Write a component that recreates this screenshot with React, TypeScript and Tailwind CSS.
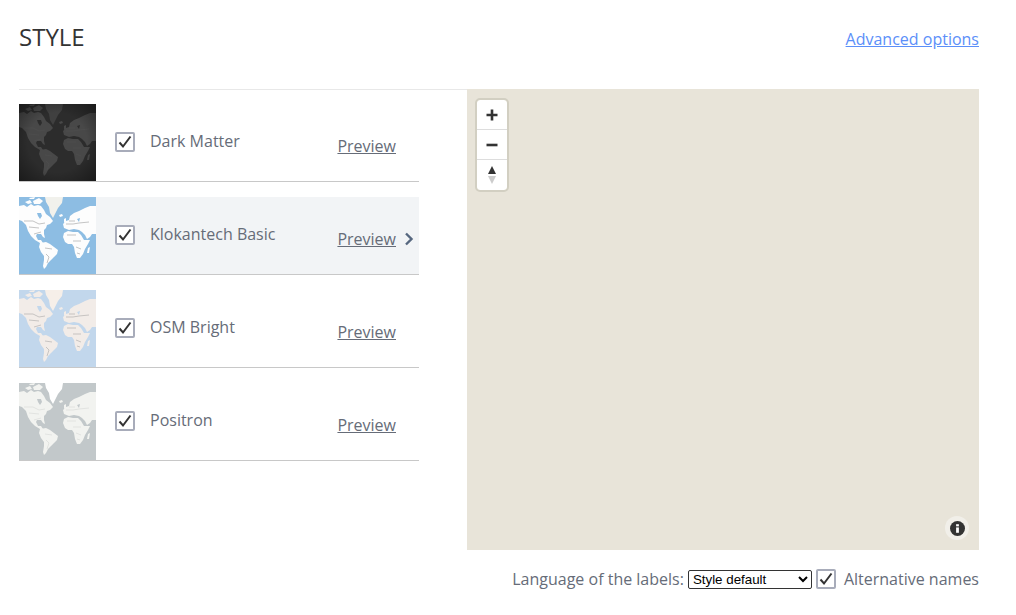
const font = { fontFamily: '"Open Sans", sans-serif' }

// rough world map drawn in a 77x77 box
function WorldThumb({ sea, land, ice, detail, dark }: { sea: string; land: string; ice: string; detail: string; dark?: boolean }) {
  const id = 'vignette'
  return (
    <svg width="77" height="77" viewBox="0 0 77 77" className="shrink-0 block">
      <defs>
        <radialGradient id={id} cx="50%" cy="50%" r="70%">
          <stop offset="55%" stopColor="#000" stopOpacity="0" />
          <stop offset="100%" stopColor="#000" stopOpacity="0.4" />
        </radialGradient>
      </defs>
      <rect width="77" height="77" fill={sea} />
      <g fill={land}>
        {/* north america */}
        <path d="M0 9 L5 8 L8 10 L12 7 L15 9 L19 8 L22 9 L25 13 L27 17 L31 20 L34 24 L31 27 L28 28 L27 31 L25 33 L25 37 L26 41 L24 40 L22 37 L18 37 L17 39 L19 43 L22 43 L24 46 L21 46 L16 43 L12 39 L9 34 L7 28 L3 24 L0 23 Z" />
        {/* arctic islands */}
        <path d="M6 5 L11 3 L13 6 L9 7 Z" />
        <path d="M14 4 L20 1 L24 4 L21 7 L15 7 Z" />
        <path d="M10 1 L16 0 L15 2 L11 2 Z" />
        {/* south america */}
        <path d="M21 46 L27 45 L31 47 L35 50 L39 53 L38 57 L35 60 L32 63 L29 66 L27 70 L25 72 L24 69 L25 63 L25 59 L22 55 L20 50 Z" />
        {/* eurasia */}
        <path d="M45 31 L44 27 L47 24 L50 23 L51 19 L55 16 L60 14 L66 11 L71 9 L77 9 L77 37 L73 37 L71 40 L68 42 L66 38 L63 35 L60 33 L55 32 L50 33 Z" />
        {/* africa */}
        <path d="M45 36 L49 34 L54 35 L59 35 L62 38 L65 43 L71 43 L69 47 L66 52 L64 57 L61 61 L58 61 L56 56 L55 50 L53 47 L49 47 L46 45 L44 40 Z" />
        <path d="M40 18 L43 17 L44 19 L41 20 Z" />
        <path d="M45 22 L47 21 L47 25 L45 26 Z" />
        <path d="M69 51 L71 50 L70 56 L68 56 Z" />
      </g>
      <path d="M26 0 L44 0 L43 6 L39 11 L36 17 L34 21 L31 16 L30 10 L27 5 Z" fill={ice} />
      <g fill={sea}>
        <path d="M18 16 L22 16 L23 19 L21 22 L19 19 Z" />
        <path d="M58 22 L61 21 L60 25 Z" />
      </g>
      <g fill="none" stroke={detail} strokeWidth="0.5">
        <path d="M5 24 H14 L20 27 L26 26 M10 30 L20 31 M15 37 L22 35" />
        <path d="M26 51 L33 52 M27 57 L30 60 L28 66" />
        <path d="M47 27 L54 27 L60 26 L70 25 M50 24 L56 24" />
        <path d="M48 38 L57 38 M54 44 L62 44 M57 50 L62 52 M58 56 L61 57" />
      </g>
      {dark && <rect width="77" height="77" fill={`url(#${id})`} />}
    </svg>
  )
}

function Check({ className }: { className: string }) {
  return (
    <div className={`shrink-0 flex items-center justify-center bg-white border-2 border-[#a8acba] rounded-[2px] ${className}`}>
      <svg width="14" height="14" viewBox="0 0 14 14">
        <path d="M1.500 7.500 L5 11.500 L12.500 1.500" fill="none" stroke="#333" strokeWidth="2" />
      </svg>
    </div>
  )
}

const styles = [
  { name: 'Dark Matter', sea: '#2c2c2c', land: '#484848', ice: '#404040', detail: '#505050', dark: true },
  { name: 'Klokantech Basic', sea: '#8dbde3', land: '#fdfdfd', ice: '#f1f1ec', detail: '#8a8a8a', active: true },
  { name: 'OSM Bright', sea: '#c2d7ec', land: '#f2ece8', ice: '#f6efe9', detail: '#9a9a9a' },
  { name: 'Positron', sea: '#c2c8ca', land: '#f2f3f0', ice: '#ffffff', detail: '#d0d2d0' },
]

function StyleRow({ item }: { item: (typeof styles)[number] }) {
  return (
    <div className={`flex items-center h-[78px] mb-[15px] border-b border-[#c8c8c8] ${item.active ? 'bg-[#f2f4f6]' : ''}`}>
      <WorldThumb sea={item.sea} land={item.land} ice={item.ice} detail={item.detail} dark={item.dark} />
      <Check className="w-[20px] h-[20px] ml-[19px] mb-[1px]" />
      <span className="ml-[15px] mb-[3px] text-base text-[#666c78]">{item.name}</span>
      <a className="ml-auto mt-[6px] text-base text-[#666c78] underline">Preview</a>
      <div className="w-[23px] mt-[6px] flex justify-end pr-[5px]">
        {item.active && (
          <svg width="10" height="14" viewBox="0 0 10 14">
            <path d="M2 1.500 L7.500 7 L2 12.500" fill="none" stroke="#56677f" strokeWidth="2.400" />
          </svg>
        )}
      </div>
    </div>
  )
}

function MapControls() {
  return (
    <div className="absolute left-[8px] top-[9px] w-[34px] bg-white rounded-[5px] border-2 border-[#d2cfc2] bg-clip-padding">
      <div className="h-[30px] flex items-center justify-center border-b border-[#dddddd]">
        <svg width="12" height="12" viewBox="0 0 12 12">
          <path d="M6 0.500 V11.500 M0.500 6 H11.500" stroke="#333" strokeWidth="2.600" />
        </svg>
      </div>
      <div className="h-[30px] flex items-center justify-center border-b border-[#dddddd]">
        <svg width="12" height="12" viewBox="0 0 12 12">
          <path d="M0.500 6 H11.500" stroke="#333" strokeWidth="2.600" />
        </svg>
      </div>
      <div className="h-[30px] flex items-center justify-center">
        <svg width="10" height="18" viewBox="0 0 10 18">
          <path d="M5 0 L9 8 H1 Z" fill="#333" />
          <path d="M5 18 L9 10 H1 Z" fill="#cccccc" />
        </svg>
      </div>
    </div>
  )
}

export default function App() {
  return (
    <div className="min-h-screen bg-white pl-[19px] pr-[37px]" style={font}>
      <div className="h-[90px] border-b border-[#e8e8e8] flex items-start justify-between">
        <h2 className="mt-[21px] text-2xl leading-[32px] text-[#333333]">STYLE</h2>
        <a className="mt-[28px] text-base leading-[22px] text-[#5b8ff9] underline">Advanced options</a>
      </div>
      <div className="flex justify-between">
        <div className="w-[400px] pt-[14px]">
          {styles.map((s) => <StyleRow key={s.name} item={s} />)}
        </div>
        <div className="relative w-[512px] h-[461px] -mt-px bg-[#e8e4d9]">
          <MapControls />
          <div className="absolute right-[10px] bottom-[10px] w-[24px] h-[24px] rounded-full bg-[#f1efe9] flex items-center justify-center">
            <svg width="15" height="15" viewBox="0 0 14 14">
              <circle cx="7" cy="7" r="7" fill="#333" />
              <rect x="5.700" y="6" width="2.600" height="5" fill="#fff" />
              <rect x="5.700" y="3" width="2.600" height="2" fill="#fff" />
            </svg>
          </div>
        </div>
      </div>
      <div className="flex items-center justify-end mt-[17px] text-base text-[#666c78]">
        <span>Language of the labels:</span>
        <select className="ml-[4px] w-[124px] h-[19px] bg-white text-black border border-[#333] rounded-[2px] text-[13.333px]" style={{ fontFamily: '"Liberation Sans", sans-serif' }} defaultValue="default">
          <option value="default">Style default</option>
        </select>
        <Check className="w-[20px] h-[20px] ml-[4px]" />
        <span className="ml-[8px]">Alternative names</span>
      </div>
    </div>
  )
}
